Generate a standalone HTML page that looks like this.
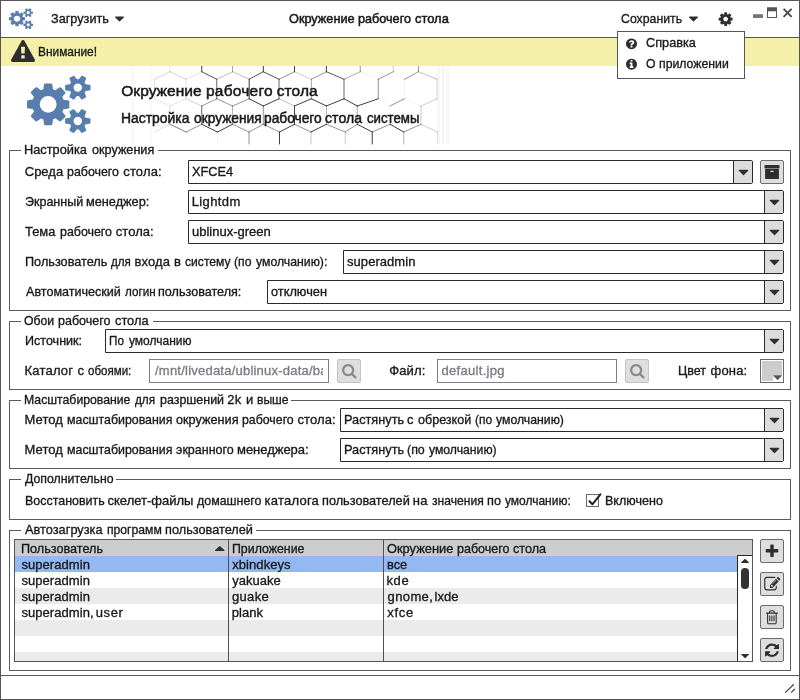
<!DOCTYPE html>
<html lang="ru">
<head>
<meta charset="utf-8">
<title>Окружение рабочего стола</title>
<style>
html,body{margin:0;padding:0;}
body{width:800px;height:700px;overflow:hidden;background:#fff;font-family:"Liberation Sans",sans-serif;}
#win{will-change:transform;position:absolute;left:0;top:0;width:800px;height:700px;background:#fff;overflow:hidden;}
#win *{box-sizing:border-box;}
.a{position:absolute;}
.t{position:absolute;white-space:pre;font-family:"Liberation Sans",sans-serif;-webkit-text-stroke:0.33px currentColor;transform-origin:0 0;}
.w{display:inline-block;position:relative;vertical-align:baseline;transform-origin:0 0;}
.lg{}
.h1{-webkit-text-stroke:0.5px currentColor;}
.fs{position:absolute;border:1px solid #5a5a5a;}
.cb{position:absolute;border:1px solid #2a2a2a;background:#fff;border-radius:0 2px 2px 0;}
.cb i{position:absolute;right:0;top:0;bottom:0;width:19px;background:#dcdcdc;border-left:1px solid #2a2a2a;}
.btn{position:absolute;width:24px;height:24px;border:1px solid #6c6c6c;background:#dedede;border-radius:2px;}
.inp{position:absolute;border:1px solid #7e7e8e;background:#fff;}
.ico{position:absolute;left:0;top:0;pointer-events:none;}
.lgbg{position:absolute;background:#fff;height:3px;}
</style>
</head>
<body>
<div id="win">
  <!-- header image area -->
  <div class="a" style="left:0;top:66px;width:800px;height:84px;background:#fff"></div>
  <svg class="ico" width="800" height="700" viewBox="0 0 800 700"><rect x="437" y="66" width="3" height="78" fill="#000" fill-opacity="0.03"/><rect x="442" y="66" width="2" height="78" fill="#000" fill-opacity="0.04"/><rect x="446" y="66" width="4" height="78" fill="#000" fill-opacity="0.025"/><rect x="131" y="66" width="3" height="78" fill="#000" fill-opacity="0.02"/><rect x="150" y="66" width="2" height="78" fill="#000" fill-opacity="0.02"/><g fill="none" stroke="#2a2a2a" stroke-width="1" stroke-linecap="round"><path d="M170.00 66.00L170.00 71.75" stroke-opacity="0.12"/><path d="M170.00 106.00L170.00 124.25" stroke-opacity="0.15"/><path d="M201.75 66.00L201.75 71.75" stroke-opacity="0.90"/><path d="M201.75 106.00L201.75 124.25" stroke-opacity="0.70"/><path d="M232.50 66.00L232.50 71.75" stroke-opacity="0.40"/><path d="M232.50 106.00L232.50 124.25" stroke-opacity="0.35"/><path d="M263.30 66.00L263.30 71.75" stroke-opacity="0.90"/><path d="M263.30 106.00L263.30 124.25" stroke-opacity="0.50"/><path d="M294.50 66.00L294.50 71.75" stroke-opacity="0.90"/><path d="M294.50 106.00L294.50 124.25" stroke-opacity="0.90"/><path d="M326.40 66.00L326.40 71.75" stroke-opacity="0.90"/><path d="M326.40 106.00L326.40 124.25" stroke-opacity="0.35"/><path d="M360.25 66.00L360.25 71.75" stroke-opacity="0.50"/><path d="M357.25 106.00L357.25 124.25" stroke-opacity="0.40"/><path d="M393.25 66.00L393.25 71.75" stroke-opacity="0.25"/><path d="M390.00 106.00L390.00 124.25" stroke-opacity="0.05"/><path d="M418.40 66.00L418.40 71.75" stroke-opacity="0.50"/><path d="M421.00 106.00L421.00 124.25" stroke-opacity="0.25"/><path d="M154.50 79.25L154.50 98.75" stroke-opacity="0.12"/><path d="M170.00 71.75L154.50 79.25" stroke-opacity="0.20"/><path d="M154.50 98.75L170.00 106.00" stroke-opacity="0.12"/><path d="M170.00 124.25L154.50 132.00" stroke-opacity="0.15"/><path d="M186.00 79.25L186.00 98.75" stroke-opacity="0.12"/><path d="M170.00 71.75L186.00 79.25" stroke-opacity="0.20"/><path d="M201.75 71.75L186.00 79.25" stroke-opacity="0.15"/><path d="M186.00 98.75L170.00 106.00" stroke-opacity="0.12"/><path d="M186.00 98.75L201.75 106.00" stroke-opacity="0.20"/><path d="M170.00 124.25L186.00 132.00" stroke-opacity="0.60"/><path d="M201.75 124.25L186.00 132.00" stroke-opacity="0.50"/><path d="M216.75 79.25L216.75 98.75" stroke-opacity="0.70"/><path d="M217.50 132.00L217.50 144.00" stroke-opacity="0.05"/><path d="M201.75 71.75L216.75 79.25" stroke-opacity="0.80"/><path d="M232.50 71.75L216.75 79.25" stroke-opacity="0.30"/><path d="M216.75 98.75L201.75 106.00" stroke-opacity="0.50"/><path d="M216.75 98.75L232.50 106.00" stroke-opacity="0.50"/><path d="M201.75 124.25L217.50 132.00" stroke-opacity="0.90"/><path d="M232.50 124.25L217.50 132.00" stroke-opacity="0.90"/><path d="M249.20 79.25L249.20 98.75" stroke-opacity="0.90"/><path d="M249.00 132.00L249.00 144.00" stroke-opacity="0.50"/><path d="M232.50 71.75L249.20 79.25" stroke-opacity="0.30"/><path d="M263.30 71.75L249.20 79.25" stroke-opacity="0.80"/><path d="M249.20 98.75L232.50 106.00" stroke-opacity="0.50"/><path d="M249.20 98.75L263.30 106.00" stroke-opacity="0.90"/><path d="M232.50 124.25L249.00 132.00" stroke-opacity="0.50"/><path d="M263.30 124.25L249.00 132.00" stroke-opacity="0.50"/><path d="M279.00 79.25L279.00 98.75" stroke-opacity="0.70"/><path d="M279.50 132.00L279.50 144.00" stroke-opacity="0.90"/><path d="M263.30 71.75L279.00 79.25" stroke-opacity="0.80"/><path d="M294.50 71.75L279.00 79.25" stroke-opacity="0.50"/><path d="M279.00 98.75L263.30 106.00" stroke-opacity="0.90"/><path d="M279.00 98.75L294.50 106.00" stroke-opacity="0.30"/><path d="M263.30 124.25L279.50 132.00" stroke-opacity="0.50"/><path d="M294.50 124.25L279.50 132.00" stroke-opacity="0.90"/><path d="M311.40 79.25L311.40 98.75" stroke-opacity="0.40"/><path d="M311.00 132.00L311.00 144.00" stroke-opacity="0.25"/><path d="M294.50 71.75L311.40 79.25" stroke-opacity="0.25"/><path d="M326.40 71.75L311.40 79.25" stroke-opacity="0.50"/><path d="M311.40 98.75L294.50 106.00" stroke-opacity="0.90"/><path d="M311.40 98.75L326.40 106.00" stroke-opacity="0.90"/><path d="M294.50 124.25L311.00 132.00" stroke-opacity="0.50"/><path d="M326.40 124.25L311.00 132.00" stroke-opacity="0.90"/><path d="M344.00 79.25L344.00 98.75" stroke-opacity="0.70"/><path d="M345.25 132.00L345.25 144.00" stroke-opacity="0.25"/><path d="M326.40 71.75L344.00 79.25" stroke-opacity="0.80"/><path d="M360.25 71.75L344.00 79.25" stroke-opacity="0.40"/><path d="M344.00 98.75L326.40 106.00" stroke-opacity="0.90"/><path d="M344.00 98.75L357.25 106.00" stroke-opacity="0.90"/><path d="M326.40 124.25L345.25 132.00" stroke-opacity="0.50"/><path d="M357.25 124.25L345.25 132.00" stroke-opacity="0.50"/><path d="M378.25 79.25L378.25 98.75" stroke-opacity="0.50"/><path d="M372.25 132.00L372.25 144.00" stroke-opacity="0.90"/><path d="M360.25 71.75L378.25 79.25" stroke-opacity="0.05"/><path d="M393.25 71.75L378.25 79.25" stroke-opacity="0.50"/><path d="M378.25 98.75L357.25 106.00" stroke-opacity="0.90"/><path d="M378.25 98.75L390.00 106.00" stroke-opacity="0.05"/><path d="M357.25 124.25L372.25 132.00" stroke-opacity="0.90"/><path d="M390.00 124.25L372.25 132.00" stroke-opacity="0.50"/><path d="M404.50 79.25L404.50 98.75" stroke-opacity="0.05"/><path d="M403.75 132.00L403.75 144.00" stroke-opacity="0.35"/><path d="M393.25 71.75L404.50 79.25" stroke-opacity="0.05"/><path d="M418.40 71.75L404.50 79.25" stroke-opacity="0.50"/><path d="M404.50 98.75L390.00 106.00" stroke-opacity="0.50"/><path d="M404.50 98.75L421.00 106.00" stroke-opacity="0.05"/><path d="M390.00 124.25L403.75 132.00" stroke-opacity="0.90"/><path d="M421.00 124.25L403.75 132.00" stroke-opacity="0.50"/><path d="M437.00 79.25L437.00 98.75" stroke-opacity="0.20"/><path d="M437.50 132.00L437.50 144.00" stroke-opacity="0.10"/><path d="M418.40 71.75L437.00 79.25" stroke-opacity="0.30"/><path d="M437.00 98.75L421.00 106.00" stroke-opacity="0.25"/><path d="M421.00 124.25L437.50 132.00" stroke-opacity="0.25"/></g></svg>
  <!-- title bar -->
  <div class="a" style="left:0;top:0;width:800px;height:38px;background:#fff;border-bottom:1px solid #555"></div>
  <!-- warning bar -->
  <div class="a" style="left:0;top:38px;width:800px;height:28px;background:#f4f0a9"></div>

  <!-- fieldsets -->
  <div class="fs" style="left:9px;top:150px;width:782px;height:161px"></div>
  <div class="fs" style="left:9px;top:321px;width:782px;height:69px"></div>
  <div class="fs" style="left:9px;top:400px;width:782px;height:69px"></div>
  <div class="fs" style="left:9px;top:479px;width:782px;height:41px"></div>
  <div class="fs" style="left:9px;top:530px;width:782px;height:141px"></div>
  <div class="lgbg" style="left:21px;top:149px;width:137px"></div>
  <div class="lgbg" style="left:21px;top:320px;width:132px"></div>
  <div class="lgbg" style="left:21px;top:399px;width:270px"></div>
  <div class="lgbg" style="left:21px;top:478px;width:95px"></div>
  <div class="lgbg" style="left:21px;top:529px;width:235px"></div>

  <!-- combos fieldset 1 -->
  <div class="cb" style="left:188px;top:160px;width:565px;height:24px"><i></i></div>
  <div class="btn" style="left:760px;top:160px"></div>
  <div class="cb" style="left:188px;top:190px;width:596px;height:24px"><i></i></div>
  <div class="cb" style="left:188px;top:220px;width:596px;height:24px"><i></i></div>
  <div class="cb" style="left:343px;top:250px;width:441px;height:24px"><i></i></div>
  <div class="cb" style="left:267px;top:280px;width:517px;height:24px"><i></i></div>

  <!-- fieldset 2 -->
  <div class="cb" style="left:105px;top:329px;width:679px;height:24px"><i></i></div>
  <div class="inp" style="left:149px;top:359px;width:180px;height:24px"></div>
  <div class="btn" style="left:337px;top:359px;border-color:#c4c4c4"></div>
  <div class="inp" style="left:437px;top:359px;width:180px;height:24px"></div>
  <div class="btn" style="left:625px;top:359px;border-color:#c4c4c4"></div>
  <div class="a" style="left:760px;top:359px;width:24px;height:24px;border:1px solid #666;background:#fff">
    <div class="a" style="left:1px;top:1px;width:20px;height:20px;background:#ccc"></div>
    <div class="a" style="right:0;bottom:0;width:10px;height:7.5px;background:#fff"></div>
  </div>

  <!-- fieldset 3 -->
  <div class="cb" style="left:340px;top:408px;width:444px;height:24px"><i></i></div>
  <div class="cb" style="left:340px;top:438px;width:444px;height:24px"><i></i></div>

  <!-- fieldset 4 checkbox -->
  <div class="a" style="left:586px;top:494px;width:13px;height:13px;border:1px solid #6a6a6a;background:#fff"></div>
  <svg class="ico" width="800" height="700" viewBox="0 0 800 700"><path d="M589.5 501.3 L592.4 504.3 L600.4 494.4" fill="none" stroke="#222" stroke-width="2" stroke-linecap="round" stroke-linejoin="round"/></svg>

  <!-- table -->
  <div class="a" style="left:14px;top:539px;width:739px;height:123px;border:1px solid #555;background:#fff;overflow:hidden">
    <div class="a" style="left:0;top:0;width:737px;height:16px;background:#cdcdcd"></div>
    <div class="a" style="left:0;top:16px;width:737px;height:16px;background:#94b9f2"></div>
    <div class="a" style="left:0;top:48px;width:737px;height:16px;background:#ebebeb"></div>
    <div class="a" style="left:0;top:80px;width:737px;height:16px;background:#ebebeb"></div>
    <div class="a" style="left:0;top:112px;width:737px;height:16px;background:#ebebeb"></div>
    <div class="a" style="left:213px;top:0;width:1px;height:123px;background:#505050"></div>
    <div class="a" style="left:368px;top:0;width:1px;height:123px;background:#505050"></div>
    <div class="a" style="left:722px;top:15px;width:16px;height:107px;border:1px solid #2a2a2a;border-right:0;border-bottom:0;background:#fff"></div>
    <div class="a" style="left:726.2px;top:27.7px;width:7.6px;height:21.5px;border-radius:3.8px;background:#333"></div>
  </div>
  <div class="btn" style="left:760px;top:539px"></div>
  <div class="btn" style="left:760px;top:572px"></div>
  <div class="btn" style="left:760px;top:605px"></div>
  <div class="btn" style="left:760px;top:638px"></div>

  <!-- status bar -->
  <div class="a" style="left:0;top:675px;width:800px;height:1px;background:#555"></div>
  <svg class="ico" width="800" height="700" viewBox="0 0 800 700"><path d="M785.3 692.6 L793.8 684.3 M791.2 692.6 L794.8 689" fill="none" stroke="#444" stroke-width="1.3"/></svg>

  <!-- window buttons -->

  <svg class="ico" width="800" height="700" viewBox="0 0 800 700"><path d="M783.6 8.8 L791.6 16.8 M791.6 8.8 L783.6 16.8" fill="none" stroke="#4a4a4a" stroke-width="1.9"/><rect x="753" y="14.2" width="10" height="3.8" fill="#777"/><rect x="767.5" y="8" width="9" height="9.5" fill="#fff" stroke="#555" stroke-width="1"/><rect x="767" y="7.5" width="10" height="3.8" fill="#555"/></svg>
  <!-- popup menu -->
  <div class="a" style="left:617px;top:31px;width:128px;height:48px;background:#fff;border:1px solid #555"></div>

<svg class="ico" width="800" height="700" viewBox="0 0 800 700">
<path fill="#577eaf" transform="matrix(0.01250 0 0 -0.01193 9.000 26.326)" d="M896 640q0 106 -75 181t-181 75t-181 -75t-75 -181t75 -181t181 -75t181 75t75 181zM1664 128q0 52 -38 90t-90 38t-90 -38t-38 -90q0 -53 37.5 -90.5t90.5 -37.5t90.5 37.5t37.5 90.5zM1664 1152q0 52 -38 90t-90 38t-90 -38t-38 -90q0 -53 37.5 -90.5t90.5 -37.5 t90.5 37.5t37.5 90.5zM1280 731v-185q0 -10 -7 -19.5t-16 -10.5l-155 -24q-11 -35 -32 -76q34 -48 90 -115q7 -11 7 -20q0 -12 -7 -19q-23 -30 -82.5 -89.5t-78.5 -59.5q-11 0 -21 7l-115 90q-37 -19 -77 -31q-11 -108 -23 -155q-7 -24 -30 -24h-186q-11 0 -20 7.5t-10 17.5 l-23 153q-34 10 -75 31l-118 -89q-7 -7 -20 -7q-11 0 -21 8q-144 133 -144 160q0 9 7 19q10 14 41 53t47 61q-23 44 -35 82l-152 24q-10 1 -17 9.5t-7 19.5v185q0 10 7 19.5t16 10.5l155 24q11 35 32 76q-34 48 -90 115q-7 11 -7 20q0 12 7 20q22 30 82 89t79 59q11 0 21 -7 l115 -90q34 18 77 32q11 108 23 154q7 24 30 24h186q11 0 20 -7.5t10 -17.5l23 -153q34 -10 75 -31l118 89q8 7 20 7q11 0 21 -8q144 -133 144 -160q0 -8 -7 -19q-12 -16 -42 -54t-45 -60q23 -48 34 -82l152 -23q10 -2 17 -10.5t7 -19.5zM1920 198v-140q0 -16 -149 -31 q-12 -27 -30 -52q51 -113 51 -138q0 -4 -4 -7q-122 -71 -124 -71q-8 0 -46 47t-52 68q-20 -2 -30 -2t-30 2q-14 -21 -52 -68t-46 -47q-2 0 -124 71q-4 3 -4 7q0 25 51 138q-18 25 -30 52q-149 15 -149 31v140q0 16 149 31q13 29 30 52q-51 113 -51 138q0 4 4 7q4 2 35 20 t59 34t30 16q8 0 46 -46.5t52 -67.5q20 2 30 2t30 -2q51 71 92 112l6 2q4 0 124 -70q4 -3 4 -7q0 -25 -51 -138q17 -23 30 -52q149 -15 149 -31zM1920 1222v-140q0 -16 -149 -31q-12 -27 -30 -52q51 -113 51 -138q0 -4 -4 -7q-122 -71 -124 -71q-8 0 -46 47t-52 68 q-20 -2 -30 -2t-30 2q-14 -21 -52 -68t-46 -47q-2 0 -124 71q-4 3 -4 7q0 25 51 138q-18 25 -30 52q-149 15 -149 31v140q0 16 149 31q13 29 30 52q-51 113 -51 138q0 4 4 7q4 2 35 20t59 34t30 16q8 0 46 -46.5t52 -67.5q20 2 30 2t30 -2q51 71 92 112l6 2q4 0 124 -70 q4 -3 4 -7q0 -25 -51 -138q17 -23 30 -52q149 -15 149 -31z"/>
<path fill="#2e2e2e" transform="matrix(0.01338 0 0 -0.01322 11.014 60.308)" d="M1024 161v190q0 14 -9.5 23.5t-22.5 9.5h-192q-13 0 -22.5 -9.5t-9.5 -23.5v-190q0 -14 9.5 -23.5t22.5 -9.5h192q13 0 22.5 9.5t9.5 23.5zM1022 535l18 459q0 12 -10 19q-13 11 -24 11h-220q-11 0 -24 -11q-10 -7 -10 -21l17 -457q0 -10 10 -16.5t24 -6.5h185 q14 0 23.5 6.5t10.5 16.5zM1008 1469l768 -1408q35 -63 -2 -126q-17 -29 -46.5 -46t-63.5 -17h-1536q-34 0 -63.5 17t-46.5 46q-37 63 -2 126l768 1408q17 31 47 49t65 18t65 -18t47 -49z"/>
<path fill="#577eaf" transform="matrix(0.03307 0 0 -0.03265 27.000 125.231)" d="M896 640q0 106 -75 181t-181 75t-181 -75t-75 -181t75 -181t181 -75t181 75t75 181zM1664 128q0 52 -38 90t-90 38t-90 -38t-38 -90q0 -53 37.5 -90.5t90.5 -37.5t90.5 37.5t37.5 90.5zM1664 1152q0 52 -38 90t-90 38t-90 -38t-38 -90q0 -53 37.5 -90.5t90.5 -37.5 t90.5 37.5t37.5 90.5zM1280 731v-185q0 -10 -7 -19.5t-16 -10.5l-155 -24q-11 -35 -32 -76q34 -48 90 -115q7 -11 7 -20q0 -12 -7 -19q-23 -30 -82.5 -89.5t-78.5 -59.5q-11 0 -21 7l-115 90q-37 -19 -77 -31q-11 -108 -23 -155q-7 -24 -30 -24h-186q-11 0 -20 7.5t-10 17.5 l-23 153q-34 10 -75 31l-118 -89q-7 -7 -20 -7q-11 0 -21 8q-144 133 -144 160q0 9 7 19q10 14 41 53t47 61q-23 44 -35 82l-152 24q-10 1 -17 9.5t-7 19.5v185q0 10 7 19.5t16 10.5l155 24q11 35 32 76q-34 48 -90 115q-7 11 -7 20q0 12 7 20q22 30 82 89t79 59q11 0 21 -7 l115 -90q34 18 77 32q11 108 23 154q7 24 30 24h186q11 0 20 -7.5t10 -17.5l23 -153q34 -10 75 -31l118 89q8 7 20 7q11 0 21 -8q144 -133 144 -160q0 -8 -7 -19q-12 -16 -42 -54t-45 -60q23 -48 34 -82l152 -23q10 -2 17 -10.5t7 -19.5zM1920 198v-140q0 -16 -149 -31 q-12 -27 -30 -52q51 -113 51 -138q0 -4 -4 -7q-122 -71 -124 -71q-8 0 -46 47t-52 68q-20 -2 -30 -2t-30 2q-14 -21 -52 -68t-46 -47q-2 0 -124 71q-4 3 -4 7q0 25 51 138q-18 25 -30 52q-149 15 -149 31v140q0 16 149 31q13 29 30 52q-51 113 -51 138q0 4 4 7q4 2 35 20 t59 34t30 16q8 0 46 -46.5t52 -67.5q20 2 30 2t30 -2q51 71 92 112l6 2q4 0 124 -70q4 -3 4 -7q0 -25 -51 -138q17 -23 30 -52q149 -15 149 -31zM1920 1222v-140q0 -16 -149 -31q-12 -27 -30 -52q51 -113 51 -138q0 -4 -4 -7q-122 -71 -124 -71q-8 0 -46 47t-52 68 q-20 -2 -30 -2t-30 2q-14 -21 -52 -68t-46 -47q-2 0 -124 71q-4 3 -4 7q0 25 51 138q-18 25 -30 52q-149 15 -149 31v140q0 16 149 31q13 29 30 52q-51 113 -51 138q0 4 4 7q4 2 35 20t59 34t30 16q8 0 46 -46.5t52 -67.5q20 2 30 2t30 -2q51 71 92 112l6 2q4 0 124 -70 q4 -3 4 -7q0 -25 -51 -138q17 -23 30 -52q149 -15 149 -31z"/>
<path fill="#2e2e2e" transform="matrix(0.00879 0 0 -0.00868 115.000 24.278)" d="M1024 832q0 -26 -19 -45l-448 -448q-19 -19 -45 -19t-45 19l-448 448q-19 19 -19 45t19 45t45 19h896q26 0 45 -19t19 -45z"/>
<path fill="#2e2e2e" transform="matrix(0.00879 0 0 -0.00868 689.000 24.278)" d="M1024 832q0 -26 -19 -45l-448 -448q-19 -19 -45 -19t-45 19l-448 448q-19 19 -19 45t19 45t45 19h896q26 0 45 -19t19 -45z"/>
<path fill="#2e2e2e" transform="matrix(0.00905 0 0 -0.00885 718.700 24.767)" d="M1024 640q0 106 -75 181t-181 75t-181 -75t-75 -181t75 -181t181 -75t181 75t75 181zM1536 749v-222q0 -12 -8 -23t-20 -13l-185 -28q-19 -54 -39 -91q35 -50 107 -138q10 -12 10 -25t-9 -23q-27 -37 -99 -108t-94 -71q-12 0 -26 9l-138 108q-44 -23 -91 -38 q-16 -136 -29 -186q-7 -28 -36 -28h-222q-14 0 -24.5 8.5t-11.5 21.5l-28 184q-49 16 -90 37l-141 -107q-10 -9 -25 -9q-14 0 -25 11q-126 114 -165 168q-7 10 -7 23q0 12 8 23q15 21 51 66.5t54 70.5q-27 50 -41 99l-183 27q-13 2 -21 12.5t-8 23.5v222q0 12 8 23t19 13 l186 28q14 46 39 92q-40 57 -107 138q-10 12 -10 24q0 10 9 23q26 36 98.5 107.5t94.5 71.5q13 0 26 -10l138 -107q44 23 91 38q16 136 29 186q7 28 36 28h222q14 0 24.5 -8.5t11.5 -21.5l28 -184q49 -16 90 -37l142 107q9 9 24 9q13 0 25 -10q129 -119 165 -170q7 -8 7 -22 q0 -12 -8 -23q-15 -21 -51 -66.5t-54 -70.5q26 -50 41 -98l183 -28q13 -2 21 -12.5t8 -23.5z"/>
<path fill="#2e2e2e" transform="matrix(0.00716 0 0 -0.00710 626.000 48.392)" d="M896 160v192q0 14 -9 23t-23 9h-192q-14 0 -23 -9t-9 -23v-192q0 -14 9 -23t23 -9h192q14 0 23 9t9 23zM1152 832q0 88 -55.5 163t-138.5 116t-170 41q-243 0 -371 -213q-15 -24 8 -42l132 -100q7 -6 19 -6q16 0 25 12q53 68 86 92q34 24 86 24q48 0 85.5 -26t37.5 -59 q0 -38 -20 -61t-68 -45q-63 -28 -115.5 -86.5t-52.5 -125.5v-36q0 -14 9 -23t23 -9h192q14 0 23 9t9 23q0 19 21.5 49.5t54.5 49.5q32 18 49 28.5t46 35t44.5 48t28 60.5t12.5 81zM1536 640q0 -209 -103 -385.5t-279.5 -279.5t-385.5 -103t-385.5 103t-279.5 279.5 t-103 385.5t103 385.5t279.5 279.5t385.5 103t385.5 -103t279.5 -279.5t103 -385.5z"/>
<path fill="#2e2e2e" transform="matrix(0.00716 0 0 -0.00710 626.000 68.792)" d="M1024 160v160q0 14 -9 23t-23 9h-96v512q0 14 -9 23t-23 9h-320q-14 0 -23 -9t-9 -23v-160q0 -14 9 -23t23 -9h96v-320h-96q-14 0 -23 -9t-9 -23v-160q0 -14 9 -23t23 -9h448q14 0 23 9t9 23zM896 1056v160q0 14 -9 23t-23 9h-192q-14 0 -23 -9t-9 -23v-160q0 -14 9 -23 t23 -9h192q14 0 23 9t9 23zM1536 640q0 -209 -103 -385.5t-279.5 -279.5t-385.5 -103t-385.5 103t-279.5 279.5t-103 385.5t103 385.5t279.5 279.5t385.5 103t385.5 -103t279.5 -279.5t103 -385.5z"/>
<path fill="#2e2e2e" transform="matrix(0.00937 0 0 -0.00937 738.700 178.200)" d="M1024 832q0 -26 -19 -45l-448 -448q-19 -19 -45 -19t-45 19l-448 448q-19 19 -19 45t19 45t45 19h896q26 0 45 -19t19 -45z"/>
<path fill="#2e2e2e" transform="matrix(0.00937 0 0 -0.00937 769.700 208.200)" d="M1024 832q0 -26 -19 -45l-448 -448q-19 -19 -45 -19t-45 19l-448 448q-19 19 -19 45t19 45t45 19h896q26 0 45 -19t19 -45z"/>
<path fill="#2e2e2e" transform="matrix(0.00937 0 0 -0.00937 769.700 238.200)" d="M1024 832q0 -26 -19 -45l-448 -448q-19 -19 -45 -19t-45 19l-448 448q-19 19 -19 45t19 45t45 19h896q26 0 45 -19t19 -45z"/>
<path fill="#2e2e2e" transform="matrix(0.00937 0 0 -0.00937 769.700 268.200)" d="M1024 832q0 -26 -19 -45l-448 -448q-19 -19 -45 -19t-45 19l-448 448q-19 19 -19 45t19 45t45 19h896q26 0 45 -19t19 -45z"/>
<path fill="#2e2e2e" transform="matrix(0.00937 0 0 -0.00937 769.700 298.200)" d="M1024 832q0 -26 -19 -45l-448 -448q-19 -19 -45 -19t-45 19l-448 448q-19 19 -19 45t19 45t45 19h896q26 0 45 -19t19 -45z"/>
<path fill="#2e2e2e" transform="matrix(0.00937 0 0 -0.00937 769.700 347.200)" d="M1024 832q0 -26 -19 -45l-448 -448q-19 -19 -45 -19t-45 19l-448 448q-19 19 -19 45t19 45t45 19h896q26 0 45 -19t19 -45z"/>
<path fill="#2e2e2e" transform="matrix(0.00937 0 0 -0.00937 769.700 426.200)" d="M1024 832q0 -26 -19 -45l-448 -448q-19 -19 -45 -19t-45 19l-448 448q-19 19 -19 45t19 45t45 19h896q26 0 45 -19t19 -45z"/>
<path fill="#2e2e2e" transform="matrix(0.00937 0 0 -0.00937 769.700 456.200)" d="M1024 832q0 -26 -19 -45l-448 -448q-19 -19 -45 -19t-45 19l-448 448q-19 19 -19 45t19 45t45 19h896q26 0 45 -19t19 -45z"/>
<path fill="#2e2e2e" transform="matrix(0.00901 0 0 -0.00911 763.923 177.833)" d="M1088 704q0 26 -19 45t-45 19h-256q-26 0 -45 -19t-19 -45t19 -45t45 -19h256q26 0 45 19t19 45zM1664 896v-960q0 -26 -19 -45t-45 -19h-1408q-26 0 -45 19t-19 45v960q0 26 19 45t45 19h1408q26 0 45 -19t19 -45zM1728 1344v-256q0 -26 -19 -45t-45 -19h-1536 q-26 0 -45 19t-19 45v256q0 26 19 45t45 19h1536q26 0 45 -19t19 -45z"/>
<path fill="#8a8a8a" transform="matrix(0.00871 0 0 -0.00871 342.000 376.269)" d="M1152 704q0 185 -131.5 316.5t-316.5 131.5t-316.5 -131.5t-131.5 -316.5t131.5 -316.5t316.5 -131.5t316.5 131.5t131.5 316.5zM1664 -128q0 -52 -38 -90t-90 -38q-54 0 -90 38l-343 342q-179 -124 -399 -124q-143 0 -273.5 55.5t-225 150t-150 225t-55.5 273.5 t55.5 273.5t150 225t225 150t273.5 55.5t273.5 -55.5t225 -150t150 -225t55.5 -273.5q0 -220 -124 -399l343 -343q37 -37 37 -90z"/>
<path fill="#8a8a8a" transform="matrix(0.00871 0 0 -0.00871 630.000 376.269)" d="M1152 704q0 185 -131.5 316.5t-316.5 131.5t-316.5 -131.5t-131.5 -316.5t131.5 -316.5t316.5 -131.5t316.5 131.5t131.5 316.5zM1664 -128q0 -52 -38 -90t-90 -38q-54 0 -90 38l-343 342q-179 -124 -399 -124q-143 0 -273.5 55.5t-225 150t-150 225t-55.5 273.5 t55.5 273.5t150 225t225 150t273.5 55.5t273.5 -55.5t225 -150t150 -225t55.5 -273.5q0 -220 -124 -399l343 -343q37 -37 37 -90z"/>
<path fill="#2e2e2e" transform="matrix(0.00895 0 0 -0.00888 765.700 557.000)" d="M1408 800v-192q0 -40 -28 -68t-68 -28h-416v-416q0 -40 -28 -68t-68 -28h-192q-40 0 -68 28t-28 68v416h-416q-40 0 -68 28t-28 68v192q0 40 28 68t68 28h416v416q0 40 28 68t68 28h192q40 0 68 -28t28 -68v-416h416q40 0 68 -28t28 -68z"/>
<path fill="#2e2e2e" transform="matrix(0.00897 0 0 -0.00973 764.200 590.500)" d="M888 352l116 116l-152 152l-116 -116v-56h96v-96h56zM1328 1072q-16 16 -33 -1l-350 -350q-17 -17 -1 -33t33 1l350 350q17 17 1 33zM1408 478v-190q0 -119 -84.5 -203.5t-203.5 -84.5h-832q-119 0 -203.5 84.5t-84.5 203.5v832q0 119 84.5 203.5t203.5 84.5h832 q63 0 117 -25q15 -7 18 -23q3 -17 -9 -29l-49 -49q-14 -14 -32 -8q-23 6 -45 6h-832q-66 0 -113 -47t-47 -113v-832q0 -66 47 -113t113 -47h832q66 0 113 47t47 113v126q0 13 9 22l64 64q15 15 35 7t20 -29zM1312 1216l288 -288l-672 -672h-288v288zM1756 1084l-92 -92 l-288 288l92 92q28 28 68 28t68 -28l152 -152q28 -28 28 -68t-28 -68z"/>
<path fill="#2e2e2e" transform="matrix(0.00838 0 0 -0.00918 766.000 623.125)" d="M512 800v-576q0 -14 -9 -23t-23 -9h-64q-14 0 -23 9t-9 23v576q0 14 9 23t23 9h64q14 0 23 -9t9 -23zM768 800v-576q0 -14 -9 -23t-23 -9h-64q-14 0 -23 9t-9 23v576q0 14 9 23t23 9h64q14 0 23 -9t9 -23zM1024 800v-576q0 -14 -9 -23t-23 -9h-64q-14 0 -23 9t-9 23v576 q0 14 9 23t23 9h64q14 0 23 -9t9 -23zM1152 76v948h-896v-948q0 -22 7 -40.5t14.5 -27t10.5 -8.5h832q3 0 10.5 8.5t14.5 27t7 40.5zM480 1152h448l-48 117q-7 9 -17 11h-317q-10 -2 -17 -11zM1408 1120v-64q0 -14 -9 -23t-23 -9h-96v-948q0 -83 -47 -143.5t-113 -60.5h-832 q-66 0 -113 58.5t-47 141.5v952h-96q-14 0 -23 9t-9 23v64q0 14 9 23t23 9h309l70 167q15 37 54 63t79 26h320q40 0 79 -26t54 -63l70 -167h309q14 0 23 -9t9 -23z"/>
<path fill="#2e2e2e" transform="matrix(0.00911 0 0 -0.00879 765.000 655.875)" d="M1511 480q0 -5 -1 -7q-64 -268 -268 -434.5t-478 -166.5q-146 0 -282.5 55t-243.5 157l-129 -129q-19 -19 -45 -19t-45 19t-19 45v448q0 26 19 45t45 19h448q26 0 45 -19t19 -45t-19 -45l-137 -137q71 -66 161 -102t187 -36q134 0 250 65t186 179q11 17 53 117 q8 23 30 23h192q13 0 22.5 -9.5t9.5 -22.5zM1536 1280v-448q0 -26 -19 -45t-45 -19h-448q-26 0 -45 19t-19 45t19 45l138 138q-148 137 -349 137q-134 0 -250 -65t-186 -179q-11 -17 -53 -117q-8 -23 -30 -23h-199q-13 0 -22.5 9.5t-9.5 22.5v7q65 268 270 434.5t480 166.5 q146 0 284 -55.5t245 -156.5l130 129q19 19 45 19t45 -19t19 -45z"/>
<path fill="#2e2e2e" transform="matrix(0.00781 0 0 -0.00729 741.000 564.867)" d="M1024 320q0 -26 -19 -45t-45 -19h-896q-26 0 -45 19t-19 45t19 45l448 448q19 19 45 19t45 -19l448 -448q19 -19 19 -45z"/>
<path fill="#2e2e2e" transform="matrix(0.00762 0 0 -0.00729 741.200 660.533)" d="M1024 832q0 -26 -19 -45l-448 -448q-19 -19 -45 -19t-45 19l-448 448q-19 19 -19 45t19 45t45 19h896q26 0 45 -19t19 -45z"/>
<path fill="#2e2e2e" transform="matrix(0.00928 0 0 -0.00868 215.000 553.222)" d="M1024 320q0 -26 -19 -45t-45 -19h-896q-26 0 -45 19t-19 45t19 45l448 448q19 19 45 19t45 -19l448 -448q19 -19 19 -45z"/>
<path fill="#555" transform="matrix(0.00830 0 0 -0.00833 773.300 382.667)" d="M1024 832q0 -26 -19 -45l-448 -448q-19 -19 -45 -19t-45 19l-448 448q-19 19 -19 45t19 45t45 19h896q26 0 45 -19t19 -45z"/>
</svg>
<span class="t " style="left:51.21px;top:11.00px;font-size:13px;line-height:16px;letter-spacing:0.000px;color:#181818;transform:scaleX(0.9751)">Загрузить</span>
<span class="t h1" style="left:289.50px;top:11.00px;font-size:13px;line-height:16px;color:#181818"><span class="w" style="width:69.25px;left:-0.73px;letter-spacing:0.000px;transform:scaleX(0.9772)">Окружение </span><span class="w" style="width:56.75px;left:-0.73px;letter-spacing:0.000px;transform:scaleX(0.9718)">рабочего </span><span class="w" style="left:-0.50px;letter-spacing:0.000px;transform:scaleX(0.9925)">стола</span></span>
<span class="t " style="left:621.49px;top:11.00px;font-size:13px;line-height:16px;letter-spacing:0.000px;color:#181818;transform:scaleX(0.9455)">Сохранить</span>
<span class="t " style="left:646.07px;top:35.00px;font-size:13px;line-height:16px;letter-spacing:0.000px;color:#181818;transform:scaleX(0.9791)">Справка</span>
<span class="t " style="left:646.80px;top:56.00px;font-size:13px;line-height:16px;color:#181818"><span class="w" style="width:13.00px;left:-0.70px;letter-spacing:0.000px;transform:scaleX(0.9371)">О </span><span class="w" style="left:-0.94px;letter-spacing:0.000px;transform:scaleX(0.9431)">приложении</span></span>
<span class="t " style="left:38.49px;top:44.00px;font-size:13px;line-height:16px;letter-spacing:0.000px;color:#181818;transform:scaleX(0.9141)">Внимание!</span>
<span class="t h1" style="left:122.00px;top:81.00px;font-size:15.5px;line-height:19px;color:#181818"><span class="w" style="width:85.00px;left:-0.75px;letter-spacing:0.031px">Окружение </span><span class="w" style="width:70.50px;left:-1.00px;letter-spacing:0.214px">рабочего </span><span class="w" style="left:-0.75px;letter-spacing:0.062px">стола</span></span>
<span class="t h1" style="left:122.00px;top:109.00px;font-size:14px;line-height:18px;color:#181818"><span class="w" style="width:72.50px;left:-1.24px;letter-spacing:0.000px;transform:scaleX(0.9926)">Настройка </span><span class="w" style="width:70.50px;left:-0.49px;letter-spacing:0.000px;transform:scaleX(0.9815)">окружения </span><span class="w" style="width:60.50px;left:-0.98px;letter-spacing:0.000px;transform:scaleX(0.9825)">рабочего </span><span class="w" style="width:41.50px;left:-0.50px;letter-spacing:0.062px">стола </span><span class="w" style="left:-0.47px;letter-spacing:0.000px;transform:scaleX(0.9444)">системы</span></span>
<span class="t lg" style="left:25.00px;top:142.00px;font-size:13px;line-height:16px;color:#181818"><span class="w" style="width:67.00px;left:-0.98px;letter-spacing:0.000px;transform:scaleX(0.9841)">Настройка </span><span class="w" style="left:-0.49px;letter-spacing:0.000px;transform:scaleX(0.9721)">окружения</span></span>
<span class="t " style="left:25.50px;top:164.00px;font-size:13px;line-height:16px;color:#181818"><span class="w" style="width:42.50px;left:-0.75px;letter-spacing:0.000px">Среда </span><span class="w" style="width:55.75px;left:-0.71px;letter-spacing:0.000px;transform:scaleX(0.9531)">рабочего </span><span class="w" style="left:-0.50px;letter-spacing:0.150px">стола:</span></span>
<span class="t " style="left:25.50px;top:194.00px;font-size:13px;line-height:16px;color:#181818"><span class="w" style="width:61.50px;left:-0.72px;letter-spacing:0.000px;transform:scaleX(0.9617)">Экранный </span><span class="w" style="left:-0.98px;letter-spacing:0.000px;transform:scaleX(0.9792)">менеджер:</span></span>
<span class="t " style="left:25.50px;top:224.00px;font-size:13px;line-height:16px;color:#181818"><span class="w" style="width:35.00px;left:-0.25px;letter-spacing:0.000px;transform:scaleX(0.9917)">Тема </span><span class="w" style="width:55.75px;left:-0.71px;letter-spacing:0.000px;transform:scaleX(0.9531)">рабочего </span><span class="w" style="left:-0.50px;letter-spacing:0.050px">стола:</span></span>
<span class="t " style="left:25.50px;top:254.00px;font-size:13px;line-height:16px;color:#181818"><span class="w" style="width:85.75px;left:-0.98px;letter-spacing:0.000px;transform:scaleX(0.9758)">Пользователь </span><span class="w" style="width:24.25px;left:-0.22px;letter-spacing:0.000px;transform:scaleX(0.8929)">для </span><span class="w" style="width:39.50px;left:-1.00px;letter-spacing:0.125px">входа </span><span class="w" style="width:10.50px;left:-1.00px;letter-spacing:0.250px">в </span><span class="w" style="width:49.50px;left:-0.47px;letter-spacing:0.000px;transform:scaleX(0.9326)">систему </span><span class="w" style="width:21.25px;left:-0.71px;letter-spacing:0.000px;transform:scaleX(0.9420)">(по </span><span class="w" style="left:-0.24px;letter-spacing:0.000px;transform:scaleX(0.9428)">умолчанию):</span></span>
<span class="t " style="left:25.50px;top:284.00px;font-size:13px;line-height:16px;color:#181818"><span class="w" style="width:99.00px;left:-0.00px;letter-spacing:0.000px;transform:scaleX(0.9666)">Автоматический </span><span class="w" style="width:34.75px;left:-0.00px;letter-spacing:0.000px;transform:scaleX(0.8947)">логин </span><span class="w" style="left:-0.97px;letter-spacing:0.000px;transform:scaleX(0.9701)">пользователя:</span></span>
<span class="t " style="left:192.21px;top:164.00px;font-size:13px;line-height:16px;letter-spacing:0.000px;color:#181818;transform:scaleX(0.9829)">XFCE4</span>
<span class="t " style="left:191.70px;top:194.00px;font-size:13px;line-height:16px;letter-spacing:0.383px;color:#181818">Lightdm</span>
<span class="t " style="left:191.95px;top:224.00px;font-size:13px;line-height:16px;letter-spacing:0.004px;color:#181818">ublinux-green</span>
<span class="t " style="left:347.00px;top:254.00px;font-size:13px;line-height:16px;letter-spacing:0.056px;color:#181818">superadmin</span>
<span class="t " style="left:271.01px;top:284.00px;font-size:13px;line-height:16px;letter-spacing:0.000px;color:#181818;transform:scaleX(0.9820)">отключен</span>
<span class="t lg" style="left:25.00px;top:313.00px;font-size:13px;line-height:16px;color:#181818"><span class="w" style="width:33.75px;left:-0.71px;letter-spacing:0.000px;transform:scaleX(0.9426)">Обои </span><span class="w" style="width:56.25px;left:-0.72px;letter-spacing:0.000px;transform:scaleX(0.9624)">рабочего </span><span class="w" style="left:-0.49px;letter-spacing:0.000px;transform:scaleX(0.9851)">стола</span></span>
<span class="t " style="left:24.54px;top:333.00px;font-size:13px;line-height:16px;letter-spacing:0.000px;color:#181818;transform:scaleX(0.9649)">Источник:</span>
<span class="t " style="left:109.50px;top:333.00px;font-size:13px;line-height:16px;color:#181818"><span class="w" style="width:19.25px;left:-0.90px;letter-spacing:0.000px;transform:scaleX(0.9000)">По </span><span class="w" style="left:-0.23px;letter-spacing:0.000px;transform:scaleX(0.9216)">умолчанию</span></span>
<span class="t " style="left:25.50px;top:363.00px;font-size:13px;line-height:16px;color:#181818"><span class="w" style="width:52.50px;left:-1.00px;letter-spacing:0.208px">Каталог </span><span class="w" style="width:10.75px;left:-0.50px;letter-spacing:0.250px">с </span><span class="w" style="left:-0.44px;letter-spacing:0.000px;transform:scaleX(0.8883)">обоями:</span></span>
<div class="a" style="left:155.00px;top:363.00px;width:168.30px;height:16px;overflow:hidden"><span class="t " style="left:0.00px;top:0px;font-size:13px;line-height:16px;letter-spacing:0.226px;color:#7b7b82">/mnt/livedata/ublinux-data/backgrounds</span></div>
<span class="t " style="left:389.25px;top:363.00px;font-size:13px;line-height:16px;letter-spacing:0.125px;color:#181818">Файл:</span>
<span class="t " style="left:441.50px;top:363.00px;font-size:13px;line-height:16px;letter-spacing:0.300px;color:#7b7b82">default.jpg</span>
<span class="t " style="left:679.00px;top:363.00px;font-size:13px;line-height:16px;color:#181818"><span class="w" style="width:32.00px;left:-0.96px;letter-spacing:0.000px;transform:scaleX(0.9643)">Цвет </span><span class="w" style="left:-0.50px;letter-spacing:0.188px">фона:</span></span>
<span class="t lg" style="left:25.00px;top:392.00px;font-size:13px;line-height:16px;color:#181818"><span class="w" style="width:110.50px;left:-0.94px;letter-spacing:0.000px;transform:scaleX(0.9417)">Масштабирование </span><span class="w" style="width:25.00px;left:-0.23px;letter-spacing:0.000px;transform:scaleX(0.9048)">для </span><span class="w" style="width:67.50px;left:-0.72px;letter-spacing:0.000px;transform:scaleX(0.9579)">разршений </span><span class="w" style="width:19.00px;left:-0.75px;letter-spacing:0.250px">2k </span><span class="w" style="width:10.50px;left:-1.00px;letter-spacing:0.250px">и </span><span class="w" style="left:-0.93px;letter-spacing:0.000px;transform:scaleX(0.9302)">выше</span></span>
<span class="t " style="left:25.50px;top:412.00px;font-size:13px;line-height:16px;color:#181818"><span class="w" style="width:42.00px;left:-1.00px;letter-spacing:0.062px">Метод </span><span class="w" style="width:108.75px;left:-0.95px;letter-spacing:0.000px;transform:scaleX(0.9518)">масштабирования </span><span class="w" style="width:66.25px;left:-0.49px;letter-spacing:0.000px;transform:scaleX(0.9761)">окружения </span><span class="w" style="width:55.50px;left:-0.71px;letter-spacing:0.000px;transform:scaleX(0.9484)">рабочего </span><span class="w" style="left:-0.50px;letter-spacing:0.100px">стола:</span></span>
<span class="t " style="left:25.50px;top:442.00px;font-size:13px;line-height:16px;color:#181818"><span class="w" style="width:42.00px;left:-1.00px;letter-spacing:0.062px">Метод </span><span class="w" style="width:108.75px;left:-0.95px;letter-spacing:0.000px;transform:scaleX(0.9518)">масштабирования </span><span class="w" style="width:61.75px;left:-0.48px;letter-spacing:0.000px;transform:scaleX(0.9619)">экранного </span><span class="w" style="left:-1.00px;letter-spacing:-0.028px">менеджера:</span></span>
<span class="t " style="left:344.50px;top:412.00px;font-size:13px;line-height:16px;color:#181818"><span class="w" style="width:63.00px;left:-0.98px;letter-spacing:0.000px;transform:scaleX(0.9791)">Растянуть </span><span class="w" style="width:11.10px;left:-0.50px;letter-spacing:0.500px">с </span><span class="w" style="width:57.00px;left:-0.48px;letter-spacing:0.000px;transform:scaleX(0.9656)">обрезкой </span><span class="w" style="width:21.00px;left:-0.69px;letter-spacing:0.000px;transform:scaleX(0.9217)">(по </span><span class="w" style="left:-0.24px;letter-spacing:0.000px;transform:scaleX(0.9423)">умолчанию)</span></span>
<span class="t " style="left:344.50px;top:442.00px;font-size:13px;line-height:16px;color:#181818"><span class="w" style="width:63.00px;left:-0.98px;letter-spacing:0.000px;transform:scaleX(0.9791)">Растянуть </span><span class="w" style="width:21.90px;left:-0.72px;letter-spacing:0.000px;transform:scaleX(0.9565)">(по </span><span class="w" style="left:-0.23px;letter-spacing:0.000px;transform:scaleX(0.9380)">умолчанию)</span></span>
<span class="t lg" style="left:25.00px;top:471.00px;font-size:13px;line-height:16px;letter-spacing:0.000px;color:#181818;transform:scaleX(0.9462)">Дополнительно</span>
<span class="t " style="left:25.50px;top:493.00px;font-size:13px;line-height:16px;color:#181818"><span class="w" style="width:82.50px;left:-0.96px;letter-spacing:0.000px;transform:scaleX(0.9572)">Восстановить </span><span class="w" style="width:89.50px;left:-0.50px;letter-spacing:0.000px">скелет-файлы </span><span class="w" style="width:68.00px;left:-0.24px;letter-spacing:0.000px;transform:scaleX(0.9551)">домашнего </span><span class="w" style="width:57.50px;left:-1.00px;letter-spacing:0.250px">каталога </span><span class="w" style="width:90.75px;left:-0.98px;letter-spacing:0.000px;transform:scaleX(0.9772)">пользователей </span><span class="w" style="width:18.25px;left:-1.00px;letter-spacing:0.250px">на </span><span class="w" style="width:55.50px;left:-0.47px;letter-spacing:0.000px;transform:scaleX(0.9309)">значения </span><span class="w" style="width:17.50px;left:-0.98px;letter-spacing:0.000px;transform:scaleX(0.9804)">по </span><span class="w" style="left:-0.23px;letter-spacing:0.000px;transform:scaleX(0.9214)">умолчанию:</span></span>
<span class="t " style="left:605.33px;top:493.00px;font-size:13px;line-height:16px;letter-spacing:0.000px;color:#181818;transform:scaleX(0.9658)">Включено</span>
<span class="t lg" style="left:25.00px;top:522.00px;font-size:13px;line-height:16px;color:#181818"><span class="w" style="width:82.90px;left:-0.00px;letter-spacing:0.000px;transform:scaleX(0.9841)">Автозагрузка </span><span class="w" style="width:58.40px;left:-0.94px;letter-spacing:0.000px;transform:scaleX(0.9357)">программ </span><span class="w" style="left:-0.98px;letter-spacing:0.000px;transform:scaleX(0.9795)">пользователей</span></span>
<span class="t " style="left:20.63px;top:541.00px;font-size:13px;line-height:16px;letter-spacing:0.000px;color:#181818;transform:scaleX(0.9716)">Пользователь</span>
<span class="t " style="left:231.55px;top:541.00px;font-size:13px;line-height:16px;letter-spacing:0.000px;color:#181818;transform:scaleX(0.9498)">Приложение</span>
<span class="t " style="left:387.50px;top:541.00px;font-size:13px;line-height:16px;color:#181818"><span class="w" style="width:70.00px;left:-0.74px;letter-spacing:0.000px;transform:scaleX(0.9886)">Окружение </span><span class="w" style="width:56.25px;left:-0.72px;letter-spacing:0.000px;transform:scaleX(0.9624)">рабочего </span><span class="w" style="left:-0.49px;letter-spacing:0.000px;transform:scaleX(0.9701)">стола</span></span>
<span class="t " style="left:21.40px;top:557.00px;font-size:13px;line-height:16px;letter-spacing:0.067px;color:#181818">superadmin</span>
<span class="t " style="left:232.25px;top:557.00px;font-size:13px;line-height:16px;letter-spacing:0.062px;color:#181818">xbindkeys</span>
<span class="t " style="left:386.51px;top:557.00px;font-size:13px;line-height:16px;letter-spacing:0.000px;color:#181818;transform:scaleX(0.9895)">все</span>
<span class="t " style="left:21.40px;top:573.00px;font-size:13px;line-height:16px;letter-spacing:0.067px;color:#181818">superadmin</span>
<span class="t " style="left:232.25px;top:573.00px;font-size:13px;line-height:16px;letter-spacing:0.000px;color:#181818">yakuake</span>
<span class="t " style="left:386.50px;top:573.00px;font-size:13px;line-height:16px;letter-spacing:0.600px;color:#181818">kde</span>
<span class="t " style="left:21.40px;top:589.00px;font-size:13px;line-height:16px;letter-spacing:0.067px;color:#181818">superadmin</span>
<span class="t " style="left:232.00px;top:589.00px;font-size:13px;line-height:16px;letter-spacing:0.312px;color:#181818">guake</span>
<span class="t " style="left:388.00px;top:589.00px;font-size:13px;line-height:16px;color:#181818"><span class="w" style="width:47.50px;left:-0.50px;letter-spacing:0.400px">gnome, </span><span class="w" style="left:-1.00px;letter-spacing:0.083px">lxde</span></span>
<span class="t " style="left:21.90px;top:605.00px;font-size:13px;line-height:16px;color:#181818"><span class="w" style="width:74.60px;left:-0.50px;letter-spacing:0.060px">superadmin, </span><span class="w" style="left:-0.75px;letter-spacing:0.583px">user</span></span>
<span class="t " style="left:231.75px;top:605.00px;font-size:13px;line-height:16px;letter-spacing:0.062px;color:#181818">plank</span>
<span class="t " style="left:387.25px;top:605.00px;font-size:13px;line-height:16px;letter-spacing:0.733px;color:#181818">xfce</span>

  <!-- window border -->
  <div class="a" style="left:0;top:0;width:800px;height:700px;border:1px solid #555;pointer-events:none"></div>
</div>
</body>
</html>
